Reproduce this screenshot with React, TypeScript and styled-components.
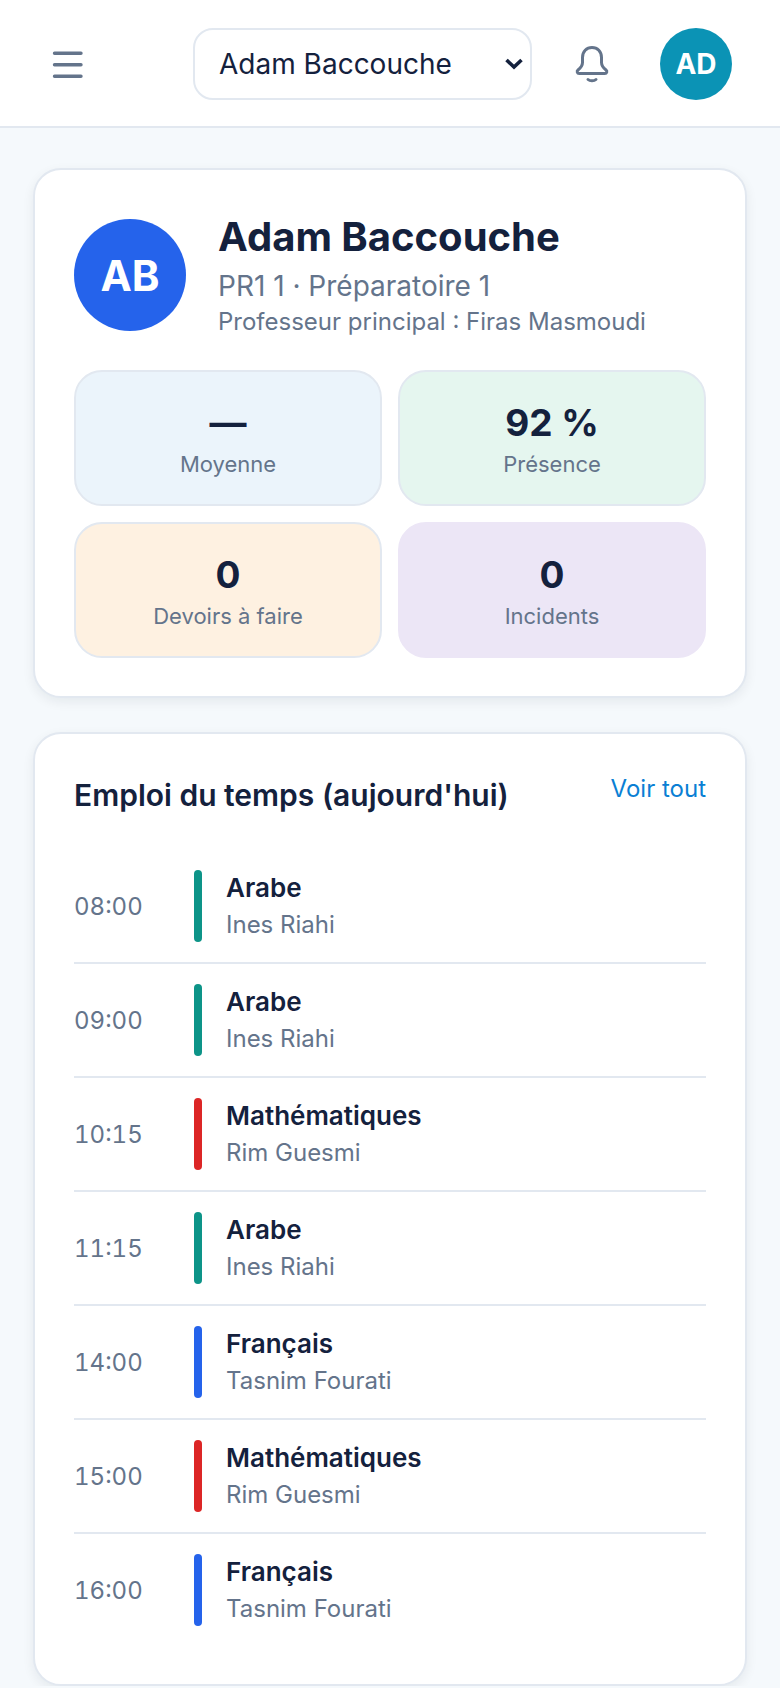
import { createGlobalStyle } from 'styled-components';
import styled from 'styled-components';

const GlobalStyle = createGlobalStyle`
    * { box-sizing: border-box; }
    html, body { margin: 0; padding: 0; }
    body {
        background: #f5f9fc;
        font-family: Inter, "Noto Sans", sans-serif;
        color: #14213d;
    }
`;

const Header = styled.header`
    display: flex;
    align-items: center;
    height: 128px;
    padding: 28px 48px 26px;
    background: #ffffff;
    border-bottom: 2px solid #e2e8f0;
`;

const IconButton = styled.button`
    display: flex;
    align-items: center;
    justify-content: center;
    padding: 0;
    border: 0;
    background: none;
`;

const SelectWrap = styled.div`
    position: relative;
    margin-left: 105px;
`;

const StudentSelect = styled.select`
    display: block;
    width: 339px;
    height: 72px;
    padding: 0 0 0 24px;
    border: 2px solid #e2e8f0;
    border-radius: 20px;
    background: #ffffff;
    font-family: inherit;
    font-size: 28px;
    color: #14213d;
    appearance: none;
`;

const Chevron = styled.svg`
    position: absolute;
    top: calc(50% - 7px);
    right: 8px;
    pointer-events: none;
`;

const BellButton = styled(IconButton)`
    margin-left: 38px;
`;

const Initials = styled.div<{ $bg: string; $size: number; $font: number }>`
    display: flex;
    flex-shrink: 0;
    align-items: center;
    justify-content: center;
    width: ${p => p.$size}px;
    height: ${p => p.$size}px;
    border-radius: 50%;
    background: ${p => p.$bg};
    color: #ffffff;
    font-size: ${p => p.$font}px;
    font-weight: 700;
`;

const HeaderAvatar = styled(Initials)`
    margin-left: auto;
`;

const Main = styled.main`
    display: flex;
    flex-direction: column;
    gap: 34px;
    padding: 40px 33px 0;
`;

const Card = styled.section`
    padding: 38px 39px;
    background: #ffffff;
    border: 2px solid #e2e8f0;
    border-radius: 28px;
    box-shadow: 0 4px 12px rgba(15, 23, 42, 0.07);
`;

const Profile = styled.div`
    display: flex;
    align-items: center;
    gap: 32px;
    padding: 5px 0 3px;
    margin-bottom: 30px;
`;

const ProfileName = styled.h1`
    margin: 0 0 8px;
    font-size: 40px;
    line-height: 48px;
    font-weight: 700;
`;

const ProfileClass = styled.div`
    font-size: 28px;
    line-height: 34px;
    color: #64748b;
`;

const ProfileTeacher = styled.div`
    margin-top: 4px;
    font-size: 24px;
    line-height: 30px;
    color: #64748b;
`;

const StatGrid = styled.div`
    display: grid;
    grid-template-columns: 1fr 1fr;
    gap: 16px;
`;

const Stat = styled.div<{ $bg: string; $plain?: boolean }>`
    display: flex;
    flex-direction: column;
    align-items: center;
    justify-content: center;
    height: 136px;
    background: ${p => p.$bg};
    border: 2px solid ${p => (p.$plain ? p.$bg : '#e2e8f0')};
    border-radius: 28px;
`;

const StatValue = styled.div`
    font-size: 37px;
    line-height: 50px;
    font-weight: 700;
`;

const StatLabel = styled.div`
    margin-top: 2px;
    font-size: 22px;
    line-height: 28px;
    color: #64748b;
`;

const CardHead = styled.div`
    display: flex;
    align-items: flex-start;
    justify-content: space-between;
    padding-top: 1px;
    margin-bottom: 33px;
`;

const CardTitle = styled.h2`
    margin: 0;
    font-size: 30px;
    line-height: 44px;
    font-weight: 600;
`;

const SeeAll = styled.a`
    font-size: 24px;
    line-height: 32px;
    color: #0a7fd4;
    text-decoration: none;
`;

const Row = styled.div`
    display: flex;
    align-items: center;
    padding: 20px 0;
    border-bottom: 2px solid #e2e8f0;

    &:last-child {
        border-bottom: 0;
    }
`;

const Time = styled.div`
    width: 120px;
    font-size: 24px;
    font-variant-numeric: tabular-nums;
    color: #64748b;
`;

const Bar = styled.div<{ $color: string }>`
    width: 8px;
    height: 72px;
    margin-right: 24px;
    border-radius: 4px;
    background: ${p => p.$color};
`;

const Subject = styled.div`
    font-size: 26px;
    line-height: 36px;
    font-weight: 600;
`;

const Teacher = styled.div`
    margin-top: 2px;
    font-size: 24px;
    line-height: 34px;
    color: #64748b;
`;

const GREEN = '#0d9488';
const RED = '#dc2626';
const BLUE = '#2563eb';

const lessons = [
    { time: '08:00', subject: 'Arabe', teacher: 'Ines Riahi', color: GREEN },
    { time: '09:00', subject: 'Arabe', teacher: 'Ines Riahi', color: GREEN },
    { time: '10:15', subject: 'Mathématiques', teacher: 'Rim Guesmi', color: RED },
    { time: '11:15', subject: 'Arabe', teacher: 'Ines Riahi', color: GREEN },
    { time: '14:00', subject: 'Français', teacher: 'Tasnim Fourati', color: BLUE },
    { time: '15:00', subject: 'Mathématiques', teacher: 'Rim Guesmi', color: RED },
    { time: '16:00', subject: 'Français', teacher: 'Tasnim Fourati', color: BLUE },
];

const MenuIcon = () => (
    <svg width="40" height="40" viewBox="0 0 40 40" fill="none" stroke="#64748b" strokeWidth="3.4" strokeLinecap="round">
        <path d="M6.500 9.300h26.500M6.500 20.700h26.500M6.500 32.300h26.500" />
    </svg>
);

const BellIcon = () => (
    <svg width="44" height="44" viewBox="0 0 44 44" fill="none" stroke="#64748b" strokeWidth="3" strokeLinecap="round" strokeLinejoin="round">
        <path d="M22 5.500c-5.500 0-9.500 4-9.500 10v5c0 3.500-2 5.500-4.500 7.500-1.500 1.200-.8 3.500 1.200 3.500h25.600c2 0 2.700-2.300 1.200-3.500-2.500-2-4.500-4-4.500-7.500v-5c0-6-4-10-9.500-10z" />
        <path d="M18 37.500c2 1.800 6 1.800 8 0" />
    </svg>
);

export default function App() {
    return (
        <>
            <GlobalStyle />
            <Header>
                <IconButton aria-label="Menu">
                    <MenuIcon />
                </IconButton>
                <SelectWrap>
                    <StudentSelect defaultValue="adam">
                        <option value="adam">Adam Baccouche</option>
                    </StudentSelect>
                    <Chevron width="20" height="14" viewBox="0 0 20 14" fill="none" stroke="#14213d" strokeWidth="3.6">
                        <path d="M2.500 3l7.500 7 7.500-7" />
                    </Chevron>
                </SelectWrap>
                <BellButton aria-label="Notifications">
                    <BellIcon />
                </BellButton>
                <HeaderAvatar $bg="#0b93b5" $size={72} $font={28}>AD</HeaderAvatar>
            </Header>
            <Main>
                <Card>
                    <Profile>
                        <Initials $bg="#2563eb" $size={112} $font={42}>AB</Initials>
                        <div>
                            <ProfileName>Adam Baccouche</ProfileName>
                            <ProfileClass>PR1 1 · Préparatoire 1</ProfileClass>
                            <ProfileTeacher>Professeur principal : Firas Masmoudi</ProfileTeacher>
                        </div>
                    </Profile>
                    <StatGrid>
                        <Stat $bg="#ebf4fb"><StatValue>—</StatValue><StatLabel>Moyenne</StatLabel></Stat>
                        <Stat $bg="#e5f6ef"><StatValue>92 %</StatValue><StatLabel>Présence</StatLabel></Stat>
                        <Stat $bg="#fef1e1"><StatValue>0</StatValue><StatLabel>Devoirs à faire</StatLabel></Stat>
                        <Stat $bg="#ece6f6" $plain><StatValue>0</StatValue><StatLabel>Incidents</StatLabel></Stat>
                    </StatGrid>
                </Card>
                <Card>
                    <CardHead>
                        <CardTitle>Emploi du temps (aujourd'hui)</CardTitle>
                        <SeeAll href="#">Voir tout</SeeAll>
                    </CardHead>
                    {lessons.map(lesson => (
                        <Row key={lesson.time}>
                            <Time>{lesson.time}</Time>
                            <Bar $color={lesson.color} />
                            <div>
                                <Subject>{lesson.subject}</Subject>
                                <Teacher>{lesson.teacher}</Teacher>
                            </div>
                        </Row>
                    ))}
                </Card>
            </Main>
        </>
    );
}
